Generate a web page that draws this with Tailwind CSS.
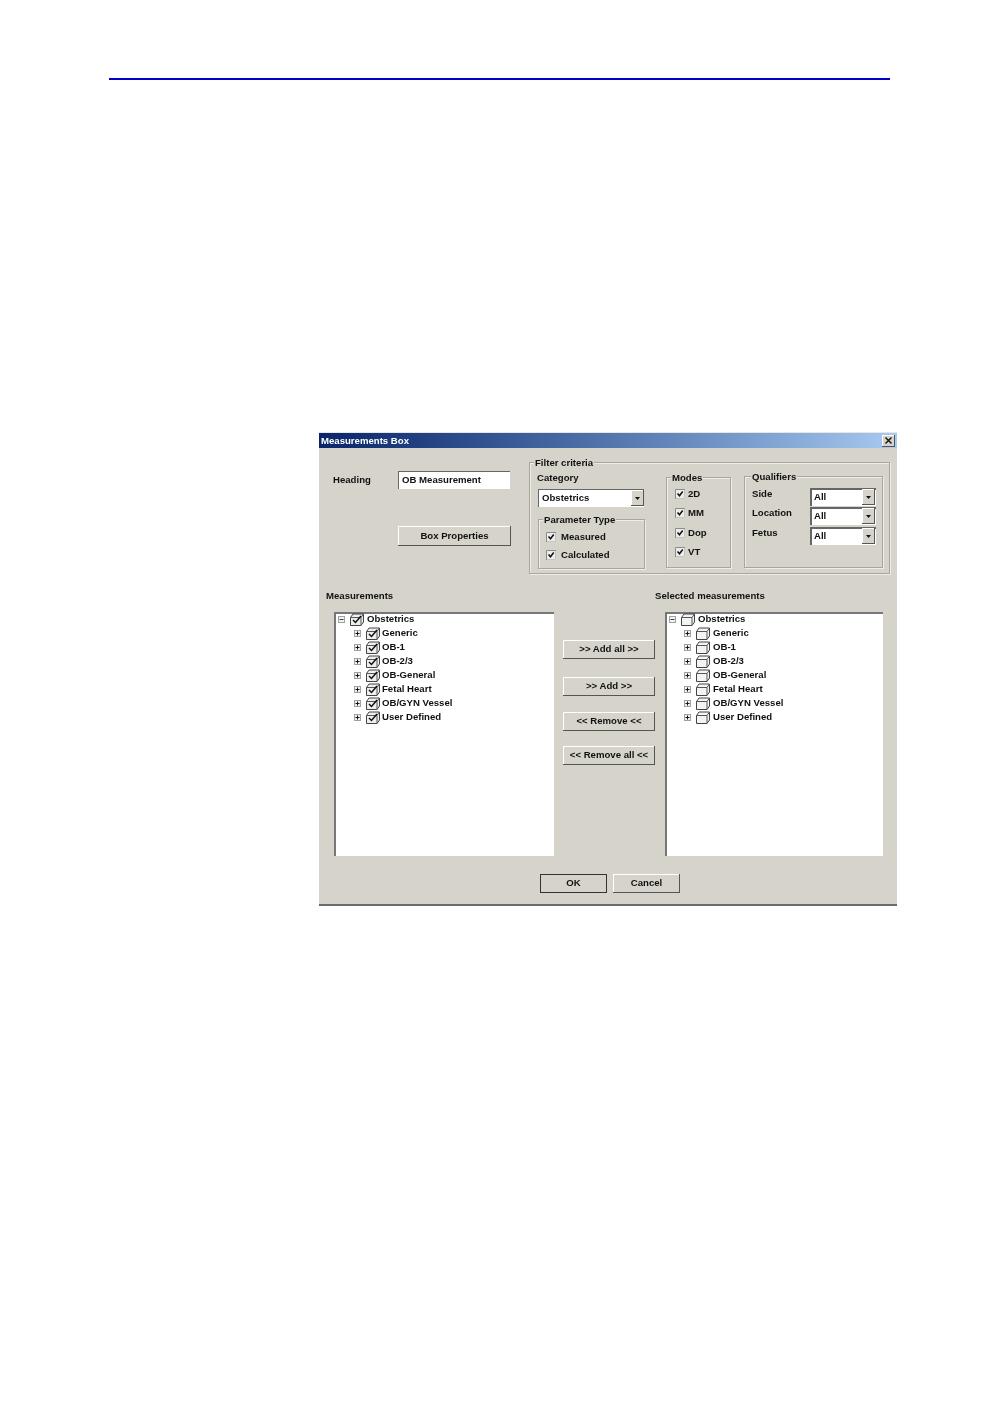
<!DOCTYPE html>
<html><head><meta charset="utf-8"><script src="https://cdn.jsdelivr.net/npm/@tailwindcss/browser@4"></script></head>
<body class="bg-white">
<svg class="hidden" width="0" height="0"><defs>
<symbol id="plus" viewBox="0 0 7 7"><rect x=".5" y=".5" width="6" height="6" fill="#f2f2f2" stroke="#a0a0a0"/><path d="M1.500 3.500h4M3.500 1.500v4" stroke="#111"/></symbol>
<symbol id="minus" viewBox="0 0 7 7"><rect x=".5" y=".5" width="6" height="6" fill="#f2f2f2" stroke="#a0a0a0"/><path d="M1.500 3.500h4" stroke="#444"/></symbol>
<symbol id="fc" viewBox="0 0 14 13"><path d="M.5 4.500L3 1h10.500v8L11 12.500H.5z" fill="#eee" stroke="#444"/><path d="M.5 4.500H11v8M11 4.500L13.500 1" fill="none" stroke="#555"/><path d="M3 7l2.500 2.500L11 3" fill="none" stroke="#111" stroke-width="1.500"/></symbol>
<symbol id="fo" viewBox="0 0 14 13"><path d="M.5 4.500L3 1h10.500v8L11 12.500H.5z" fill="#f4f4f4" stroke="#444"/><path d="M.5 4.500H11v8M11 4.500L13.500 1" fill="none" stroke="#555"/></symbol>
<symbol id="cb" viewBox="0 0 10 10"><rect width="10" height="10" fill="#eeece8"/><path d="M.5 10V.5H10" fill="none" stroke="#8a8a8a"/><path d="M9.500 1v8.500H1" fill="none" stroke="#c4c4c0"/><path d="M2.500 4.500l2 2.300 3.200-4.300" fill="none" stroke="#111" stroke-width="1.500"/></symbol>
<symbol id="arrow" viewBox="0 0 5 3"><path d="M0 0h5L2.500 3z" fill="#111"/></symbol>
</defs></svg>

<div class="pt-[78px] font-['Liberation_Sans',Arial,sans-serif]">
  <div class="ml-[109px] w-[781px] h-[2px] bg-[#0000c8]"></div>

  <div class="ml-[319px] mt-[352px] w-[578px] h-[474px] bg-[#d6d3cb] border-b-2 border-[#6d6c68] text-[9.6px] font-bold leading-none text-[#111] blur-[0.4px]">
    <!-- title bar -->
    <div class="flex items-center justify-between h-[16px] pl-[2px] pr-[2px] border-t border-[#e8e6e0] bg-gradient-to-r from-[#0a246a] to-[#a6caf0] text-white">
      <span>Measurements Box</span>
      <span class="flex items-center justify-center w-[13px] h-[12px] bg-[#d6d3cb] shadow-[inset_-1px_-1px_0_#555,inset_1px_1px_0_#fff]">
        <svg width="7" height="7" viewBox="0 0 7 7"><path d="M.5.5l6 6M6.500.5l-6 6" stroke="#111" stroke-width="1.400"/></svg>
      </span>
    </div>

    <!-- upper section -->
    <div class="flex h-[126px] pt-[14px]">
      <div class="w-[210px] pl-[14px] pt-[9px]">
        <div class="flex items-center h-[18px]">
          <span class="w-[65px]">Heading</span>
          <span class="flex items-center w-[112px] h-[18px] pl-[4px] pb-[1px] bg-white shadow-[inset_1px_1px_0_#666]">OB Measurement</span>
        </div>
        <button class="flex items-center justify-center ml-[65px] mt-[37px] w-[113px] h-[20px] pb-[1px] font-bold bg-[#d6d3cb] shadow-[inset_-1px_-1px_0_#555,inset_1px_1px_0_#fff]">Box Properties</button>
      </div>

      <!-- filter -->
      <div class="relative flex w-[361px] h-[112px] border border-[#a9a69f] shadow-[inset_1px_1px_0_#eeece6,1px_1px_0_#eeece6]">
        <span class="absolute left-[4px] -top-[5px] px-[1px] bg-[#d6d3cb]">Filter criteria</span>
        <div class="w-[136px] pl-[8px] pt-[10px]">
          <div class="h-[16px] -ml-[1px]">Category</div>
          <div class="flex items-center justify-between w-[106px] h-[18px] pl-[4px] bg-white shadow-[inset_1px_1px_0_#666]">Obstetrics
            <span class="flex items-center justify-center w-[13px] h-[16px] bg-[#d6d3cb] shadow-[inset_-1px_-1px_0_#555,inset_1px_1px_0_#fff]"><svg width="5" height="3"><use href="#arrow"/></svg></span>
          </div>
          <div class="relative mt-[12px] w-[107px] h-[50px] border border-[#a9a69f] shadow-[inset_1px_1px_0_#eeece6,1px_1px_0_#eeece6] pl-[7px] pt-[12px]">
            <span class="absolute left-[4px] -top-[5px] px-[1px] bg-[#d6d3cb]">Parameter Type</span>
            <div class="flex items-center h-[10px] gap-[5px]"><svg width="10" height="10"><use href="#cb"/></svg>Measured</div>
            <div class="flex items-center h-[10px] gap-[5px] mt-[8px]"><svg width="10" height="10"><use href="#cb"/></svg>Calculated</div>
          </div>
        </div>
        <div class="relative mt-[14px] w-[65px] h-[91px] border border-[#a9a69f] shadow-[inset_1px_1px_0_#eeece6,1px_1px_0_#eeece6] pl-[8px] pt-[11px]">
          <span class="absolute left-[4px] -top-[5px] px-[1px] bg-[#d6d3cb]">Modes</span>
          <div class="flex items-center h-[10px] gap-[3px]"><svg width="10" height="10"><use href="#cb"/></svg>2D</div>
          <div class="flex items-center h-[10px] gap-[3px] mt-[9px]"><svg width="10" height="10"><use href="#cb"/></svg>MM</div>
          <div class="flex items-center h-[10px] gap-[3px] mt-[10px]"><svg width="10" height="10"><use href="#cb"/></svg>Dop</div>
          <div class="flex items-center h-[10px] gap-[3px] mt-[9px]"><svg width="10" height="10"><use href="#cb"/></svg>VT</div>
        </div>
        <div class="relative ml-[13px] mt-[13px] w-[139px] h-[92px] border border-[#a9a69f] shadow-[inset_1px_1px_0_#eeece6,1px_1px_0_#eeece6] pl-[7px] pt-[11px]">
          <span class="absolute left-[6px] -top-[5px] px-[1px] bg-[#d6d3cb]">Qualifiers</span>
          <div class="flex items-start h-[19px]"><span class="w-[58px] pt-[1px]">Side</span>
            <span class="flex items-center justify-between w-[66px] h-[18px] pl-[4px] bg-white shadow-[inset_2px_2px_0_#666]">All<span class="flex items-center justify-center w-[13px] h-[16px] mr-[1px] bg-[#d6d3cb] shadow-[inset_-1px_-1px_0_#555,inset_1px_1px_0_#fff]"><svg width="5" height="3"><use href="#arrow"/></svg></span></span></div>
          <div class="flex items-start h-[20px]"><span class="w-[58px] pt-[1px]">Location</span>
            <span class="flex items-center justify-between w-[66px] h-[18px] pl-[4px] bg-white shadow-[inset_2px_2px_0_#666]">All<span class="flex items-center justify-center w-[13px] h-[16px] mr-[1px] bg-[#d6d3cb] shadow-[inset_-1px_-1px_0_#555,inset_1px_1px_0_#fff]"><svg width="5" height="3"><use href="#arrow"/></svg></span></span></div>
          <div class="flex items-start h-[18px]"><span class="w-[58px] pt-[1px]">Fetus</span>
            <span class="flex items-center justify-between w-[66px] h-[18px] pl-[4px] bg-white shadow-[inset_2px_2px_0_#666]">All<span class="flex items-center justify-center w-[13px] h-[16px] mr-[1px] bg-[#d6d3cb] shadow-[inset_-1px_-1px_0_#555,inset_1px_1px_0_#fff]"><svg width="5" height="3"><use href="#arrow"/></svg></span></span></div>
        </div>
      </div>
    </div>

    <!-- labels -->
    <div class="flex mt-[16px] h-[13px] items-center pl-[7px] pb-[1px]">
      <span class="w-[329px]">Measurements</span><span>Selected measurements</span>
    </div>

    <!-- lists -->
    <div class="flex mt-[9px] h-[244px] pl-[15px]">
      <div class="w-[220px] h-[244px] bg-white shadow-[inset_2px_2px_0_#777]">
        <div class="flex items-center h-[14px] pl-[4px]"><svg width="7" height="7"><use href="#minus"/></svg><svg class="ml-[5px] mr-[3px]" width="14" height="13"><use href="#fc"/></svg>Obstetrics</div>
        <div class="flex items-center h-[14px] pl-[20px]"><svg width="7" height="7"><use href="#plus"/></svg><svg class="ml-[5px] mr-[2px]" width="14" height="13"><use href="#fc"/></svg>Generic</div>
        <div class="flex items-center h-[14px] pl-[20px]"><svg width="7" height="7"><use href="#plus"/></svg><svg class="ml-[5px] mr-[2px]" width="14" height="13"><use href="#fc"/></svg>OB-1</div>
        <div class="flex items-center h-[14px] pl-[20px]"><svg width="7" height="7"><use href="#plus"/></svg><svg class="ml-[5px] mr-[2px]" width="14" height="13"><use href="#fc"/></svg>OB-2/3</div>
        <div class="flex items-center h-[14px] pl-[20px]"><svg width="7" height="7"><use href="#plus"/></svg><svg class="ml-[5px] mr-[2px]" width="14" height="13"><use href="#fc"/></svg>OB-General</div>
        <div class="flex items-center h-[14px] pl-[20px]"><svg width="7" height="7"><use href="#plus"/></svg><svg class="ml-[5px] mr-[2px]" width="14" height="13"><use href="#fc"/></svg>Fetal Heart</div>
        <div class="flex items-center h-[14px] pl-[20px]"><svg width="7" height="7"><use href="#plus"/></svg><svg class="ml-[5px] mr-[2px]" width="14" height="13"><use href="#fc"/></svg>OB/GYN Vessel</div>
        <div class="flex items-center h-[14px] pl-[20px]"><svg width="7" height="7"><use href="#plus"/></svg><svg class="ml-[5px] mr-[2px]" width="14" height="13"><use href="#fc"/></svg>User Defined</div>
      </div>

      <div class="ml-[9px] w-[92px] pt-[28px]">
        <button class="flex items-center justify-center w-[92px] h-[19px] pb-[2px] font-bold bg-[#d6d3cb] shadow-[inset_-1px_-1px_0_#555,inset_1px_1px_0_#fff]">&gt;&gt; Add all &gt;&gt;</button>
        <button class="flex items-center justify-center w-[92px] h-[19px] pb-[2px] mt-[18px] font-bold bg-[#d6d3cb] shadow-[inset_-1px_-1px_0_#555,inset_1px_1px_0_#fff]">&gt;&gt; Add &gt;&gt;</button>
        <button class="flex items-center justify-center w-[92px] h-[19px] pb-[1px] mt-[16px] font-bold bg-[#d6d3cb] shadow-[inset_-1px_-1px_0_#555,inset_1px_1px_0_#fff]">&lt;&lt; Remove &lt;&lt;</button>
        <button class="flex items-center justify-center w-[92px] h-[19px] pb-[1px] mt-[15px] font-bold bg-[#d6d3cb] shadow-[inset_-1px_-1px_0_#555,inset_1px_1px_0_#fff]">&lt;&lt; Remove all &lt;&lt;</button>
      </div>

      <div class="ml-[10px] w-[218px] h-[244px] bg-white shadow-[inset_2px_2px_0_#777]">
        <div class="flex items-center h-[14px] pl-[4px]"><svg width="7" height="7"><use href="#minus"/></svg><svg class="ml-[5px] mr-[3px]" width="14" height="13"><use href="#fo"/></svg>Obstetrics</div>
        <div class="flex items-center h-[14px] pl-[19px]"><svg width="7" height="7"><use href="#plus"/></svg><svg class="ml-[5px] mr-[3px]" width="14" height="13"><use href="#fo"/></svg>Generic</div>
        <div class="flex items-center h-[14px] pl-[19px]"><svg width="7" height="7"><use href="#plus"/></svg><svg class="ml-[5px] mr-[3px]" width="14" height="13"><use href="#fo"/></svg>OB-1</div>
        <div class="flex items-center h-[14px] pl-[19px]"><svg width="7" height="7"><use href="#plus"/></svg><svg class="ml-[5px] mr-[3px]" width="14" height="13"><use href="#fo"/></svg>OB-2/3</div>
        <div class="flex items-center h-[14px] pl-[19px]"><svg width="7" height="7"><use href="#plus"/></svg><svg class="ml-[5px] mr-[3px]" width="14" height="13"><use href="#fo"/></svg>OB-General</div>
        <div class="flex items-center h-[14px] pl-[19px]"><svg width="7" height="7"><use href="#plus"/></svg><svg class="ml-[5px] mr-[3px]" width="14" height="13"><use href="#fo"/></svg>Fetal Heart</div>
        <div class="flex items-center h-[14px] pl-[19px]"><svg width="7" height="7"><use href="#plus"/></svg><svg class="ml-[5px] mr-[3px]" width="14" height="13"><use href="#fo"/></svg>OB/GYN Vessel</div>
        <div class="flex items-center h-[14px] pl-[19px]"><svg width="7" height="7"><use href="#plus"/></svg><svg class="ml-[5px] mr-[3px]" width="14" height="13"><use href="#fo"/></svg>User Defined</div>
      </div>
    </div>

    <!-- footer -->
    <div class="flex mt-[18px] pl-[221px] gap-[6px]">
      <button class="flex items-center justify-center w-[67px] h-[19px] pb-[1px] font-bold bg-[#d6d3cb] border border-[#333]">OK</button>
      <button class="flex items-center justify-center w-[67px] h-[19px] pb-[1px] font-bold bg-[#d6d3cb] shadow-[inset_-1px_-1px_0_#555,inset_1px_1px_0_#fff]">Cancel</button>
    </div>
  </div>
</div>
</body></html>
